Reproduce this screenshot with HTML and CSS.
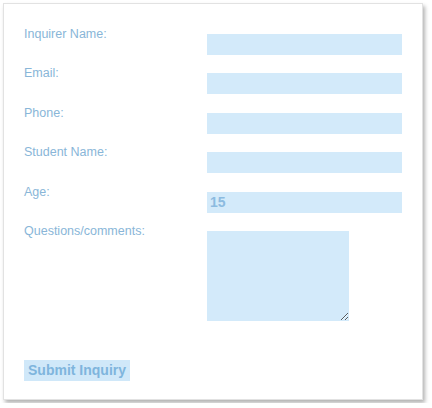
FILE: index.html
```html
<!DOCTYPE html>
<html lang="en">
<head>
    <meta charset="UTF-8">
    <meta name="viewport" content="width=device-width, initial-scale=1.0">
    <title>Inquiry</title>
    <link rel="stylesheet" href="styles.css">
</head>
<body>

    <div class="card">
        <!-- Inquiry form -->
        <form class="inquiry-form" onsubmit="return false;">
            <div class="fields">
                <label for="inquirerName">Inquirer Name:</label>
                <input type="text" id="inquirerName" name="inquirerName">

                <label for="email">Email:</label>
                <input type="text" id="email" name="email">

                <label for="phone">Phone:</label>
                <input type="text" id="phone" name="phone">

                <label for="studentName">Student Name:</label>
                <input type="text" id="studentName" name="studentName">

                <label for="age">Age:</label>
                <input type="text" id="age" name="age" value="15">

                <label for="comments">Questions/comments:</label>
                <textarea id="comments" name="comments"></textarea>
            </div>

            <button type="submit" class="submit-button">Submit Inquiry</button>
        </form>
    </div>

</body>
</html>
```

FILE: styles.css
```css
body {
    margin: 0;
    background-color: #ffffff;
    font-family: 'Liberation Sans', Arial, sans-serif;
}

.card {
    margin: 3px;
    width: 420px;
    height: 397px;
    border: 1px solid #e2e2e2;
    box-shadow: 2px 3px 4px rgba(0, 0, 0, 0.3);
    background-color: #ffffff;
    padding: 22px 0 0 20px;
    box-sizing: border-box;
}

.fields {
    display: grid;
    grid-template-columns: 183px 195px;
    row-gap: 10.4px;
    align-items: start;
}

label {
    padding-top: 1px;
    font-size: 12.5px;
    color: #89b6d8;
    line-height: 14px;
}

input, textarea {
    margin: 8px 0 0 0;
    border: none;
    background-color: #d3eafa;
    box-sizing: border-box;
    outline: none;
}

input {
    width: 195px;
    height: 21px;
    padding: 0 3px;
    font-family: 'Liberation Sans', Arial, sans-serif;
    font-size: 14px;
    font-weight: bold;
    color: #8cbbe0;
}

textarea {
    width: 142px;
    height: 90px;
}

.submit-button {
    margin-top: 39px;
    width: 106px;
    height: 21px;
    padding: 0;
    border: none;
    background-color: #d0e8f9;
    color: #7fb5dd;
    font-family: 'Liberation Sans', Arial, sans-serif;
    font-size: 14px;
    font-weight: bold;
    cursor: pointer;
}
```
